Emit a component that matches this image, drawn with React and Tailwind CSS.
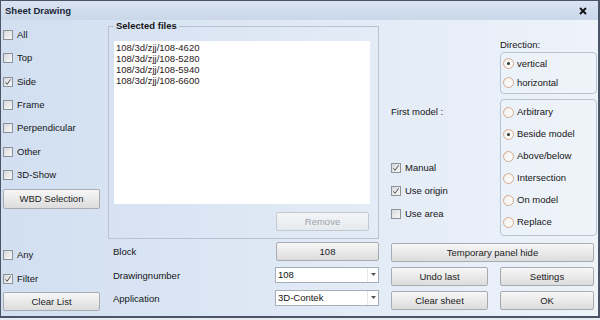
import React from "react";

function Check({ checked }) {
  return (
    <span className="w-[10px] h-[10px] border border-[#8e939a] bg-linear-to-br from-[#d6d9dd] to-[#f8f8f8] flex items-center justify-center shrink-0">
      {checked && (
        <svg width="8" height="8" viewBox="0 0 8 8">
          <path d="M1.4 4.3 L3.1 6.3 L6.6 1.3" fill="none" stroke="#505050" strokeWidth="1" />
        </svg>
      )}
    </span>
  );
}

function CheckRow({ label, checked, className = "" }) {
  return (
    <div className={"flex items-center h-[16px] " + className}>
      <Check checked={checked} />
      <span className="ml-[4px]">{label}</span>
    </div>
  );
}

function Radio({ label, checked, h }) {
  return (
    <div className={"flex items-center pl-[1px] " + h}>
      <span className="w-[11px] h-[11px] rounded-full border border-[#d6a98a] bg-linear-to-br from-[#f1efed] to-[#ffffff] flex items-center justify-center shrink-0">
        {checked && <span className="w-[3px] h-[3px] rounded-full bg-[#333]" />}
      </span>
      <span className="ml-[3px]">{label}</span>
    </div>
  );
}

function Btn({ children, className = "", disabled }) {
  return (
    <div
      className={
        "flex items-center justify-center rounded-[2px] border " +
        (disabled
          ? "border-[#c3c9d1] bg-linear-to-b from-[#f3f5f8] to-[#e6e9ee] text-[#9ea4ac] "
          : "border-[#a8acb2] bg-linear-to-b from-[#f7f7f7] to-[#dcdcdc] text-[#1b1b1b] ") +
        className
      }
    >
      {children}
    </div>
  );
}

function Combo({ value }) {
  return (
    <div className="w-[104px] h-[16px] border border-[#a6aeb9] bg-white flex items-stretch">
      <span className="flex-1 pl-[2px] flex items-center">{value}</span>
      <span className="w-[11px] border-l border-[#e3e6ea] flex items-center justify-center">
        <svg width="5" height="3" viewBox="0 0 5 3">
          <path d="M0 0 H5 L2.5 3 Z" fill="#555" />
        </svg>
      </span>
    </div>
  );
}

export default function App() {
  return (
    <div className="w-[600px] h-[320px] bg-[#e6ebf1] font-['Liberation_Sans',Arial,sans-serif] text-[9.5px] leading-[12px] text-[#151515]">
      <div className="w-[600px] h-[318px] border-l border-t border-r-2 border-b-2 border-[#4a5567] flex flex-col">
        {/* title bar */}
        <div className="h-[19px] shrink-0 bg-linear-to-b from-[#d9e4f2] to-[#c9d7ea] flex items-center pl-[4px] pr-[6px]">
          <span className="font-bold text-[#1c2738]">Sheet Drawing</span>
          <svg className="ml-auto mr-[5px]" width="8" height="8" viewBox="0 0 8 8">
            <path d="M1 1 L7 7 M7 1 L1 7" stroke="#111" strokeWidth="1.8" />
          </svg>
        </div>
        {/* body */}
        <div className="flex-1 flex bg-linear-to-r from-[#d1dff1] via-[#e0e9f5] to-[#eef3fa] pl-[2px]">
          {/* left column */}
          <div className="w-[97px] flex flex-col">
            <div className="mt-[7px] h-[156px] flex flex-col justify-between">
              <CheckRow label="All" />
              <CheckRow label="Top" />
              <CheckRow label="Side" checked />
              <CheckRow label="Frame" />
              <CheckRow label="Perpendicular" />
              <CheckRow label="Other" />
              <CheckRow label="3D-Show" />
            </div>
            <Btn className="mt-[6px] h-[20px]">WBD Selection</Btn>
            <CheckRow label="Any" className="mt-[38px]" />
            <CheckRow label="Filter" checked className="mt-[8px]" />
            <Btn className="mt-[5px] h-[19px]">Clear List</Btn>
          </div>

          {/* middle column */}
          <div className="ml-[8px] w-[271px] flex flex-col">
            <fieldset className="h-[219px] border border-[#b7c3d2] pl-[5px] pr-[8px]">
              <legend className="px-[2px] font-bold leading-[12px] text-[#151515]">Selected files</legend>
              <div className="mt-[9px] h-[163px] bg-white pl-[2px] text-[#2b2020] leading-[11px] pt-[1px]">
                <div>108/3d/zjj/108-4620</div>
                <div>108/3d/zjj/108-5280</div>
                <div>108/3d/zjj/108-5940</div>
                <div>108/3d/zjj/108-6600</div>
              </div>
              <div className="flex justify-end mt-[8px] pr-[1px]">
                <Btn disabled className="w-[93px] h-[19px]">Remove</Btn>
              </div>
            </fieldset>
            <div className="mt-[3px] flex items-center justify-between pl-[5px]">
              <span>Block</span>
              <Btn className="w-[103px] h-[19px]">108</Btn>
            </div>
            <div className="mt-[5px] h-[17px] flex items-center justify-between pl-[5px]">
              <span className="mt-[3px]">Drawingnumber</span>
              <Combo value="108" />
            </div>
            <div className="mt-[6px] h-[17px] flex items-center justify-between pl-[5px]">
              <span className="mt-[3px]">Application</span>
              <Combo value="3D-Contek" />
            </div>
          </div>

          {/* right column */}
          <div className="ml-[12px] w-[206px] flex flex-col">
            <div className="flex">
              <div className="w-[97px] flex flex-col">
                <div className="mt-[86px] h-[12px]">First model :</div>
                <div className="mt-[42px] flex flex-col gap-[7px]">
                  <CheckRow label="Manual" checked />
                  <CheckRow label="Use origin" checked />
                  <CheckRow label="Use area" />
                </div>
              </div>
              <div className="ml-[12px] w-[97px] flex flex-col">
                <div className="mt-[19px] h-[12px]">Direction:</div>
                <div className="mt-[1px] h-[42px] rounded-[4px] border border-[#b9c4d1] bg-[#f1f5fb]/40 pt-[1px] pl-[1px]">
                  <Radio label="vertical" checked h="h-[19px]" />
                  <Radio label="horizontal" h="h-[19px]" />
                </div>
                <div className="mt-[5px] h-[137px] rounded-[4px] border border-[#b9c4d1] bg-[#f1f5fb]/40 pt-[1px] pl-[1px]">
                  <Radio label="Arbitrary" h="h-[22px]" />
                  <Radio label="Beside model" checked h="h-[22px]" />
                  <Radio label="Above/below" h="h-[22px]" />
                  <Radio label="Intersection" h="h-[22px]" />
                  <Radio label="On model" h="h-[22px]" />
                  <Radio label="Replace" h="h-[22px]" />
                </div>
              </div>
            </div>
            <div className="mt-[7px] w-[203px] flex flex-col gap-[5px]">
              <Btn className="h-[19px]">Temporary panel hide</Btn>
              <div className="flex justify-between">
                <Btn className="w-[97px] h-[19px]">Undo last</Btn>
                <Btn className="w-[94px] h-[19px]">Settings</Btn>
              </div>
              <div className="flex justify-between">
                <Btn className="w-[97px] h-[19px]">Clear sheet</Btn>
                <Btn className="w-[94px] h-[19px]">OK</Btn>
              </div>
            </div>
          </div>
        </div>
      </div>
    </div>
  );
}
